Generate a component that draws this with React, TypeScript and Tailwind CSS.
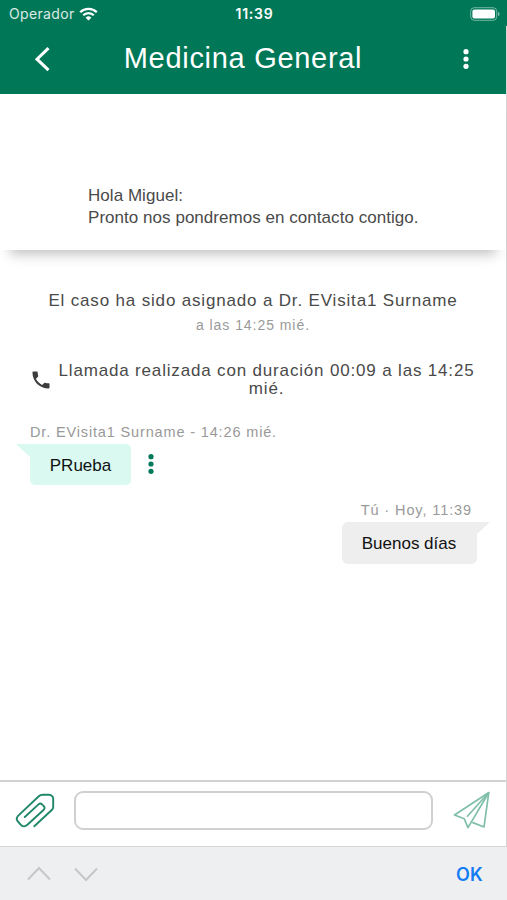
import React from 'react';

const StatusBar = () => (
  <div className="grid grid-cols-3 items-center h-[26px] pl-[9px] pr-[7px] pt-px text-white font-['Inter','Liberation_Sans',sans-serif]">
    <div className="flex items-center gap-[4px]">
      <span className="text-[14px] tracking-[0.35px] text-white/85">Operador</span>
      <svg width="19" height="14" viewBox="0 0 19 14" fill="none" stroke="currentColor" strokeWidth="2.3">
        <path d="M1.2 5.2a11.8 11.8 0 0 1 16.6 0" />
        <path d="M4.2 8.3a7.5 7.5 0 0 1 10.6 0" />
        <path d="M9.5 13.6 6.6 10.7a4.1 4.1 0 0 1 5.8 0z" fill="currentColor" stroke="none" />
      </svg>
    </div>
    <span className="text-center text-[14px] font-semibold tracking-[0.8px]">11:39</span>
    <svg className="justify-self-end" width="30" height="14" viewBox="0 0 30 14">
      <rect x="0.7" y="0.7" width="26" height="12.6" rx="3.6" fill="none" stroke="white" strokeOpacity="0.45" />
      <rect x="2.4" y="2.4" width="22.6" height="9.2" rx="2" fill="white" />
      <path d="M28 4.8c2.1.8 2.1 3.6 0 4.4z" fill="white" fillOpacity="0.5" />
    </svg>
  </div>
);

const Dots = ({ className }: { className?: string }) => (
  <svg className={className} width="6" height="20" viewBox="0 0 6 20" fill="currentColor">
    <circle cx="3" cy="2.7" r="2.6" />
    <circle cx="3" cy="10" r="2.6" />
    <circle cx="3" cy="17.3" r="2.6" />
  </svg>
);

const Header = () => (
  <div className="flex items-center h-[68px] pl-[34px] pr-[37px] text-white">
    <svg className="mt-[-2px]" width="16" height="26" viewBox="0 0 16 26" fill="none" stroke="currentColor" strokeWidth="3">
      <path d="M14.5 2.2 3 13.2l11.5 11" />
    </svg>
    <h1 className="flex-1 text-center mt-[-4px] pr-[27px] text-[29px] leading-[34px] tracking-[0.7px] whitespace-nowrap">
      Medicina General
    </h1>
    <Dots className="mt-[-2px]" />
  </div>
);

const Conversation = () => (
  <div className="flex-1 flex flex-col">
    <p className="mt-[40px] text-center text-[17px] leading-[22px] tracking-[0.83px] text-[#4a4a4a] whitespace-nowrap">
      El caso ha sido asignado a Dr. EVisita1 Surname
    </p>
    <p className="mt-[4px] text-center text-[14px] leading-[18px] tracking-[0.95px] text-[#999]">
      a las 14:25 mié.
    </p>

    <div className="flex items-center mt-[28px] pl-[32px] text-[#4a4a4a]">
      <svg width="18" height="18" viewBox="2.5 2.5 19 19" fill="#3c3c3c">
        <path d="M6.62 10.79c1.44 2.83 3.76 5.14 6.59 6.59l2.2-2.2c.27-.27.67-.36 1.02-.24 1.12.37 2.33.57 3.57.57.55 0 1 .45 1 1V20c0 .55-.45 1-1 1-9.39 0-17-7.61-17-17 0-.55.45-1 1-1h3.5c.55 0 1 .45 1 1 0 1.25.2 2.45.57 3.57.11.35.03.74-.25 1.02l-2.2 2.2z" />
      </svg>
      <p className="w-[433px] text-center text-[17px] leading-[18px] tracking-[0.83px]">
        Llamada realizada con duración 00:09 a las 14:25
        <br />
        mié.
      </p>
    </div>

    <div className="mt-[25px] pl-[30px]">
      <p className="text-[14.5px] leading-[18px] tracking-[0.85px] text-[#999]">Dr. EVisita1 Surname - 14:26 mié.</p>
      <div className="flex items-center mt-[3px]">
        <div className="relative w-[101px] h-[41px] rounded-[5px] rounded-tl-none bg-[#d9f9f1] text-center text-[17px] leading-[43px] text-[#111]">
          <svg className="absolute left-[-14px] top-0" width="15" height="14" viewBox="0 0 15 14" fill="#d9f9f1">
            <path d="M0 0h15v14z" />
          </svg>
          PRueba
        </div>
        <Dots className="ml-[17px] mt-[-2px] text-[#00795a]" />
      </div>
    </div>

    <div className="flex flex-col items-end mt-[16px] pr-[29px]">
      <p className="pr-[5px] text-[14.5px] leading-[18px] tracking-[0.9px] text-[#999]">Tú · Hoy, 11:39</p>
      <div className="relative w-[135px] h-[42px] mt-[3px] rounded-[6px] rounded-tr-none bg-[#eee] pr-px text-center text-[17px] leading-[43px] text-[#111]">
        <svg className="absolute right-[-13px] top-0" width="14" height="13" viewBox="0 0 14 13" fill="#eee">
          <path d="M0 0h14L0 13z" />
        </svg>
        Buenos días
      </div>
    </div>
  </div>
);

const Composer = () => (
  <div className="flex items-start h-[66px] pt-[9px] pl-[15px] border-t-2 border-[#d2d2d2]">
    <svg className="mt-px" width="40" height="38" viewBox="0 0 40 38" fill="none" stroke="#20876a" strokeWidth="1.9" strokeLinecap="round" strokeLinejoin="round">
      <path d="M19.3 34.2 37 17.8c.8-.8 1.2-1.5 1.2-2.7V6.6c0-1.4-.4-2.1-1.5-2.9-1-.8-1.7-1.1-3-1.1l-6.2.2c-1.6 0-2.6.5-3.7 1.5L3.3 23.6c-2 1.9-2.3 3.5-.6 5.6l2.7 3.2c2.1 2.4 4.6 2.6 7 .4L28.5 18c1.4-1.3 1.5-2.4.3-3.8l-1.8-1.8c-1.2-1.2-2.1-1.2-3.5 0L9.8 25" />
    </svg>
    <input className="ml-[19px] w-[359px] h-[39px] rounded-[9px] border-2 border-[#d0d0d0] bg-white outline-none" />
    <svg className="ml-[20px]" width="38" height="39" viewBox="0 0 38 39" fill="none" stroke="#7fbfa9" strokeWidth="1.7" strokeLinejoin="round">
      <path d="M35.8 1.5 1.5 24l9.8 3.8L15 36.6z" />
      <path d="M35.8 1.5 31 36l-11.7-4.6M35.8 1.5 14 25.7" />
    </svg>
  </div>
);

export default function App() {
  return (
    <div className="flex flex-col w-[507px] h-[900px] overflow-hidden bg-white font-['Liberation_Sans',Arial,sans-serif]">
      <div className="bg-[#007857]">
        <StatusBar />
      </div>
      <div className="flex-1 flex flex-col border-r border-[#d5d5d5]">
        <div className="bg-[#007857]">
          <Header />
        </div>
        <div className="h-[156px] pt-[91px] pl-[88px] text-[17px] leading-[22px] tracking-[0.04px] text-[#4a4a4a] shadow-[0_14px_12px_-10px_rgba(0,0,0,0.25)]">
          <p>Hola Miguel:</p>
          <p>Pronto nos pondremos en contacto contigo.</p>
        </div>
        <Conversation />
        <Composer />
      </div>
      <div className="flex items-center h-[54px] pl-[27px] pr-[24px] border-t border-[#d5d5d5] bg-[#eeeff1]">
        <svg width="72" height="16" viewBox="0 0 72 16" fill="none" stroke="#c6c7ca" strokeWidth="2">
          <path d="M1 13.5 12 2l11 11.5M48 2.5 59 14 70 2.5" />
        </svg>
        <span className="ml-auto mt-px text-[18px] font-semibold tracking-[0.3px] text-[#137cf3] font-['Inter','Liberation_Sans',sans-serif]">OK</span>
      </div>
    </div>
  );
}
